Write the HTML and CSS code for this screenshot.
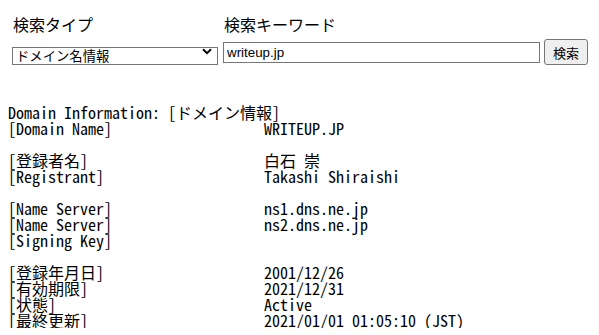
FILE: index.html
```html
<!DOCTYPE html>
<html lang="ja">
<head>
    <meta charset="utf-8">
    <title>Whois 検索</title>
    <link rel="stylesheet" href="styles.css">
</head>
<body>
    <form class="search-form">
        <div class="field type-field">
            <label for="type">検索タイプ</label>
            <div class="select-wrap">
                <select id="type">
                    <option>ドメイン名情報</option>
                </select>
                <svg class="chevron" width="10" height="7" viewBox="0 0 10 7">
                    <path d="M1 1.2 L5 5.2 L9 1.2" fill="none" stroke="#000" stroke-width="2"/>
                </svg>
            </div>
        </div>
        <div class="field keyword-field">
            <label for="keyword">検索キーワード</label>
            <div class="keyword-row">
                <input type="text" id="keyword" value="writeup.jp">
                <button type="button" id="search">検索</button>
            </div>
        </div>
    </form>

    <div class="result">
        <div class="line">Domain Information: [ドメイン情報]</div>
        <div class="row"><span>[Domain Name]</span><span>WRITEUP.JP</span></div>
        <div class="blank"></div>
        <div class="row"><span>[登録者名]</span><span>白石 崇</span></div>
        <div class="row"><span>[Registrant]</span><span>Takashi Shiraishi</span></div>
        <div class="blank"></div>
        <div class="row"><span>[Name Server]</span><span>ns1.dns.ne.jp</span></div>
        <div class="row"><span>[Name Server]</span><span>ns2.dns.ne.jp</span></div>
        <div class="row"><span>[Signing Key]</span><span></span></div>
        <div class="blank"></div>
        <div class="row"><span>[登録年月日]</span><span>2001/12/26</span></div>
        <div class="row"><span>[有効期限]</span><span>2021/12/31</span></div>
        <div class="row"><span>[状態]</span><span>Active</span></div>
        <div class="row"><span>[最終更新]</span><span>2021/01/01 01:05:10 (JST)</span></div>
    </div>
</body>
</html>
```

FILE: styles.css
```css
body {
    margin: 8px;
    background-color: #ffffff;
    color: #000000;
    font-family: "Noto Sans CJK JP", sans-serif;
}

.search-form {
    display: flex;
    align-items: flex-start;
    gap: 5px;
    padding-left: 4px;
    margin-top: 6px;
}
.field label {
    display: block;
    font-size: 16px;
    line-height: 20px;
    margin-bottom: 8px;
    padding-left: 1px;
}
.keyword-field label {
    margin-bottom: 5px;
}
.select-wrap {
    position: relative;
    width: 206px;
    height: 18px;
}
select {
    appearance: none;
    width: 206px;
    height: 18px;
    box-sizing: border-box;
    font-family: "Noto Sans CJK JP", sans-serif;
    font-size: 13.33px;
    line-height: 15px;
    color: #000000;
    border: 1px solid #767676;
    border-radius: 0;
    padding: 0 0 1px 3px;
    background-color: #ffffff;
}
.chevron {
    position: absolute;
    right: 6px;
    top: 6px;
    pointer-events: none;
}
.keyword-row {
    display: flex;
    align-items: center;
    gap: 4px;
}
input {
    width: 317px;
    height: 21px;
    box-sizing: border-box;
    border: 1px solid #767676;
    padding: 1px 3px;
    font-family: "Liberation Sans", Arial, sans-serif;
    font-size: 13.33px;
}
button {
    width: 44px;
    height: 26px;
    font-family: "Noto Sans CJK JP", sans-serif;
    font-size: 13px;
    border: 1px solid #767676;
    border-radius: 3px;
    background-color: #efefef;
    padding: 0;
}

.result {
    margin-top: 39px;
    font-family: "Noto Sans Mono CJK JP", "Liberation Mono", monospace;
    font-size: 16px;
}
.line,
.row {
    height: 16px;
    line-height: 16px;
    white-space: pre;
}
.row {
    display: grid;
    grid-template-columns: 256px 1fr;
}
.blank {
    height: 16px;
}
```
